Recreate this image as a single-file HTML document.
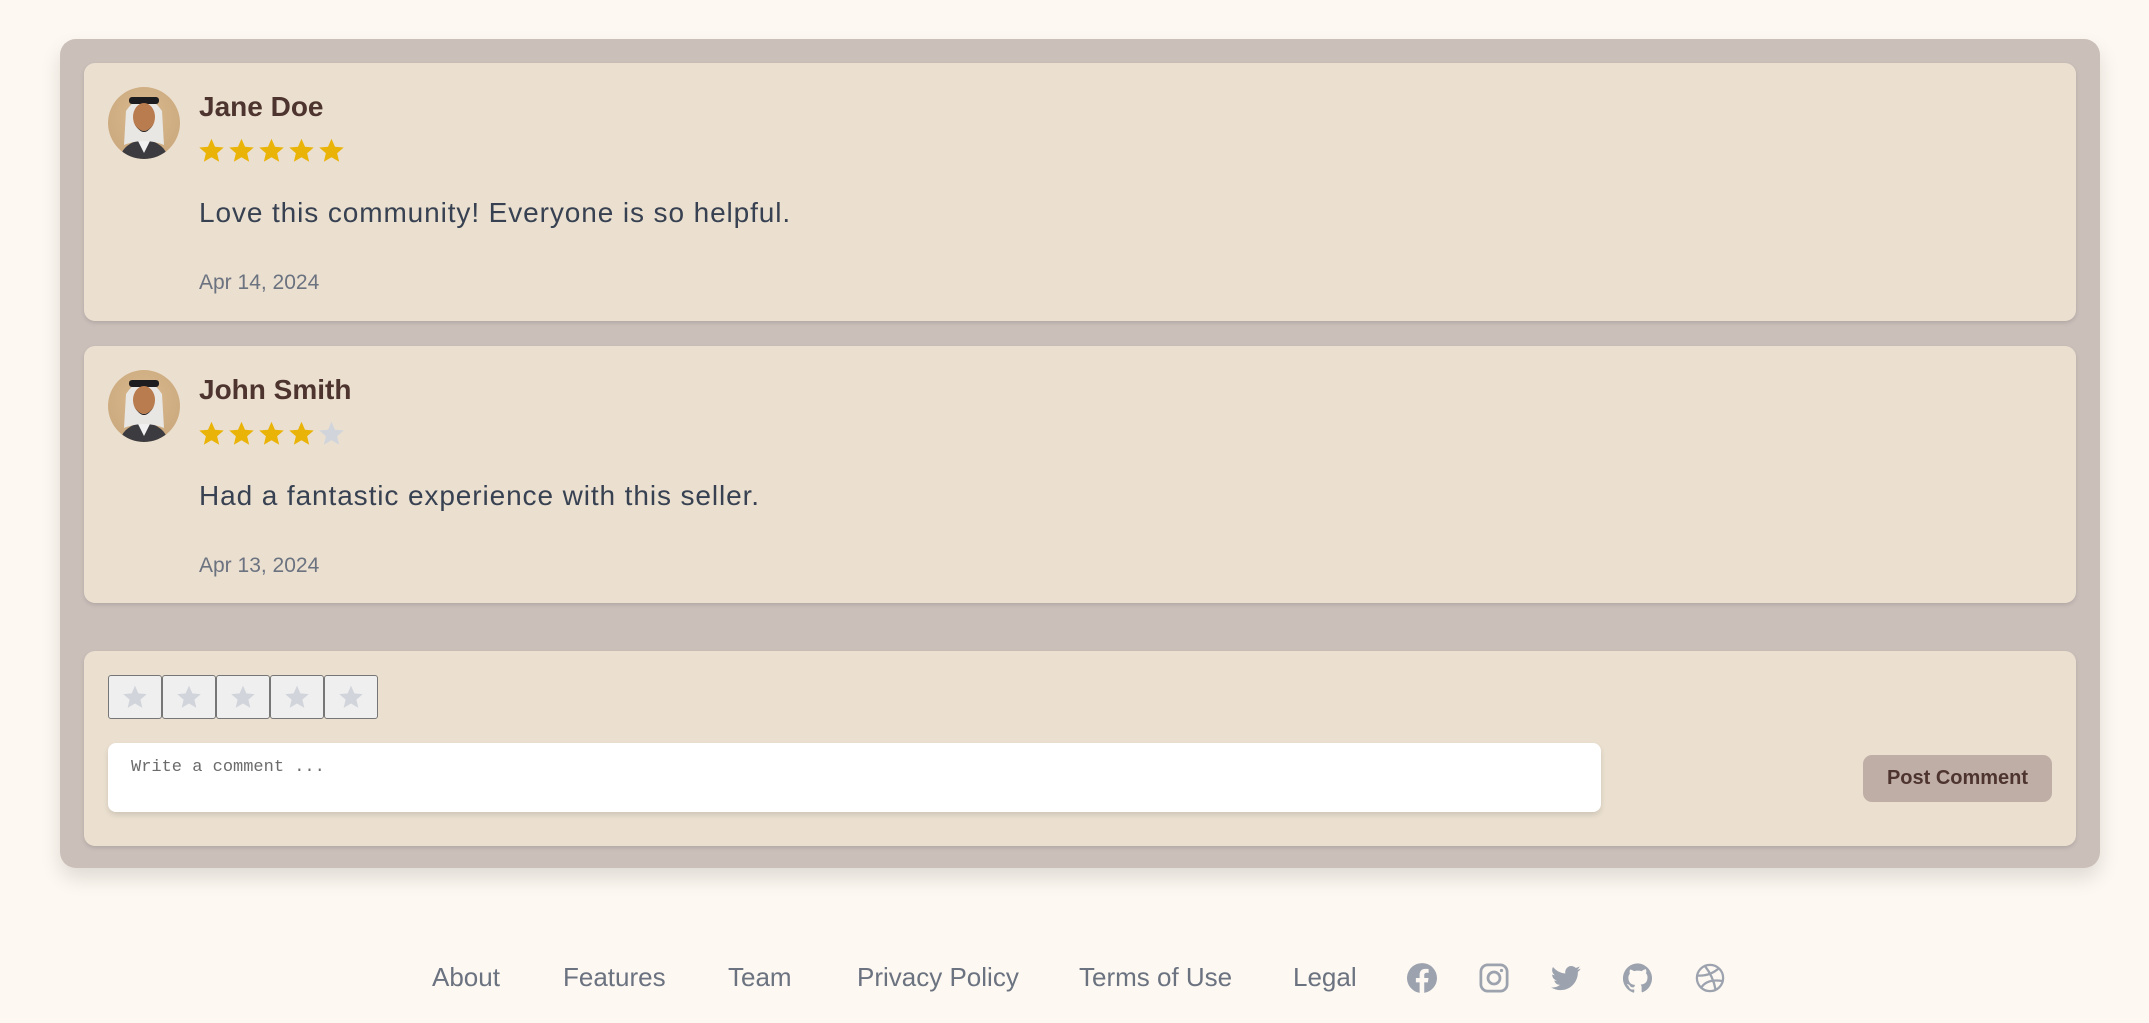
<!DOCTYPE html>
<html><head><meta charset="utf-8"><style>
*{box-sizing:border-box;margin:0;padding:0}
body{width:2149px;height:1023px;background:#fdf8f1;font-family:"Liberation Sans",sans-serif;position:relative;overflow:hidden}
.outer{position:absolute;left:60px;top:39px;width:2040px;height:829px;background:#cbbfba;border-radius:16px;box-shadow:0 10px 20px rgba(0,0,0,.12)}
.card{position:absolute;left:84px;width:1992px;background:#ebe0d0;border-radius:11px;box-shadow:0 2px 4px rgba(0,0,0,.12)}
.av{position:absolute;left:24px;top:24px;width:72px;height:72px;border-radius:50%;background:radial-gradient(circle at 50% 40%,#d9b98e,#c8a57a);overflow:hidden}
.name{position:absolute;left:115px;top:28px;font-size:28px;font-weight:bold;color:#4e342e}
.stars{position:absolute;left:114px;top:74px;display:flex;gap:3px}
.txt{position:absolute;left:115px;top:134px;font-size:28px;letter-spacing:0.9px;color:#374151}
.date{position:absolute;left:115px;top:208px;font-size:21px;color:#6b7280}
.sb{width:54px;height:44px;background:#efefef;border:1.5px solid #767676;border-radius:3px;display:flex;align-items:center;justify-content:center}
.foot{position:absolute;top:962px;font-size:26px;color:#6b7280}
.ic{position:absolute;top:963px;width:30px;height:30px}
</style></head><body>
<div class="outer"></div>

<div class="card" style="top:63px;height:258px">
  <div class="av"><svg width="72" height="72" viewBox="0 0 72 72"><path d="M12 72 Q14 56 36 52 Q58 56 60 72Z" fill="#3b3b40"/><path d="M29 52 L36 66 L43 52Z" fill="#f1f1f1"/><path d="M18 24 Q36 -2 54 24 L56 58 Q36 50 16 58Z" fill="#e9e7e4"/><rect x="21" y="10" width="30" height="7" rx="3" fill="#1d1d1f"/><ellipse cx="36" cy="30" rx="11" ry="14" fill="#b97c4f"/><path d="M25 34 Q36 56 47 34 Q42 44 36 44 Q30 44 25 34Z" fill="#1f1a18"/></svg></div>
  <div class="name">Jane Doe</div>
  <div class="stars">
    <svg width="27" height="27" viewBox="0 0 24 24"><path d="M12 1.5l3.1 7.2 7.8.6-5.9 5.1 1.8 7.6L12 18l-6.8 4 1.8-7.6L1.1 9.3l7.8-.6z" fill="#eab308"/></svg>
    <svg width="27" height="27" viewBox="0 0 24 24"><path d="M12 1.5l3.1 7.2 7.8.6-5.9 5.1 1.8 7.6L12 18l-6.8 4 1.8-7.6L1.1 9.3l7.8-.6z" fill="#eab308"/></svg>
    <svg width="27" height="27" viewBox="0 0 24 24"><path d="M12 1.5l3.1 7.2 7.8.6-5.9 5.1 1.8 7.6L12 18l-6.8 4 1.8-7.6L1.1 9.3l7.8-.6z" fill="#eab308"/></svg>
    <svg width="27" height="27" viewBox="0 0 24 24"><path d="M12 1.5l3.1 7.2 7.8.6-5.9 5.1 1.8 7.6L12 18l-6.8 4 1.8-7.6L1.1 9.3l7.8-.6z" fill="#eab308"/></svg>
    <svg width="27" height="27" viewBox="0 0 24 24"><path d="M12 1.5l3.1 7.2 7.8.6-5.9 5.1 1.8 7.6L12 18l-6.8 4 1.8-7.6L1.1 9.3l7.8-.6z" fill="#eab308"/></svg>
  </div>
  <div class="txt">Love this community! Everyone is so helpful.</div>
  <div class="date">Apr 14, 2024</div>
</div>

<div class="card" style="top:346px;height:257px">
  <div class="av"><svg width="72" height="72" viewBox="0 0 72 72"><path d="M12 72 Q14 56 36 52 Q58 56 60 72Z" fill="#3b3b40"/><path d="M29 52 L36 66 L43 52Z" fill="#f1f1f1"/><path d="M18 24 Q36 -2 54 24 L56 58 Q36 50 16 58Z" fill="#e9e7e4"/><rect x="21" y="10" width="30" height="7" rx="3" fill="#1d1d1f"/><ellipse cx="36" cy="30" rx="11" ry="14" fill="#b97c4f"/><path d="M25 34 Q36 56 47 34 Q42 44 36 44 Q30 44 25 34Z" fill="#1f1a18"/></svg></div>
  <div class="name">John Smith</div>
  <div class="stars">
    <svg width="27" height="27" viewBox="0 0 24 24"><path d="M12 1.5l3.1 7.2 7.8.6-5.9 5.1 1.8 7.6L12 18l-6.8 4 1.8-7.6L1.1 9.3l7.8-.6z" fill="#eab308"/></svg>
    <svg width="27" height="27" viewBox="0 0 24 24"><path d="M12 1.5l3.1 7.2 7.8.6-5.9 5.1 1.8 7.6L12 18l-6.8 4 1.8-7.6L1.1 9.3l7.8-.6z" fill="#eab308"/></svg>
    <svg width="27" height="27" viewBox="0 0 24 24"><path d="M12 1.5l3.1 7.2 7.8.6-5.9 5.1 1.8 7.6L12 18l-6.8 4 1.8-7.6L1.1 9.3l7.8-.6z" fill="#eab308"/></svg>
    <svg width="27" height="27" viewBox="0 0 24 24"><path d="M12 1.5l3.1 7.2 7.8.6-5.9 5.1 1.8 7.6L12 18l-6.8 4 1.8-7.6L1.1 9.3l7.8-.6z" fill="#eab308"/></svg>
    <svg width="27" height="27" viewBox="0 0 24 24"><path d="M12 1.5l3.1 7.2 7.8.6-5.9 5.1 1.8 7.6L12 18l-6.8 4 1.8-7.6L1.1 9.3l7.8-.6z" fill="#d1d5db"/></svg>
  </div>
  <div class="txt">Had a fantastic experience with this seller.</div>
  <div class="date">Apr 13, 2024</div>
</div>

<div class="card" style="top:651px;height:195px">
  <div style="position:absolute;left:24px;top:24px;display:flex">
    <div class="sb"><svg width="26" height="26" viewBox="0 0 24 24"><path d="M12 1.5l3.1 7.2 7.8.6-5.9 5.1 1.8 7.6L12 18l-6.8 4 1.8-7.6L1.1 9.3l7.8-.6z" fill="#d1d5db"/></svg></div>
    <div class="sb"><svg width="26" height="26" viewBox="0 0 24 24"><path d="M12 1.5l3.1 7.2 7.8.6-5.9 5.1 1.8 7.6L12 18l-6.8 4 1.8-7.6L1.1 9.3l7.8-.6z" fill="#d1d5db"/></svg></div>
    <div class="sb"><svg width="26" height="26" viewBox="0 0 24 24"><path d="M12 1.5l3.1 7.2 7.8.6-5.9 5.1 1.8 7.6L12 18l-6.8 4 1.8-7.6L1.1 9.3l7.8-.6z" fill="#d1d5db"/></svg></div>
    <div class="sb"><svg width="26" height="26" viewBox="0 0 24 24"><path d="M12 1.5l3.1 7.2 7.8.6-5.9 5.1 1.8 7.6L12 18l-6.8 4 1.8-7.6L1.1 9.3l7.8-.6z" fill="#d1d5db"/></svg></div>
    <div class="sb"><svg width="26" height="26" viewBox="0 0 24 24"><path d="M12 1.5l3.1 7.2 7.8.6-5.9 5.1 1.8 7.6L12 18l-6.8 4 1.8-7.6L1.1 9.3l7.8-.6z" fill="#d1d5db"/></svg></div>
  </div>
  <div style="position:absolute;left:24px;top:92px;width:1493px;height:69px;background:#fff;border-radius:8px;box-shadow:0 3px 6px rgba(0,0,0,.12);padding:15px 23px;font-family:'Liberation Mono',monospace;font-size:17px;color:#6b6b6b">Write a comment ...</div>
  <div style="position:absolute;left:1779px;top:104px;width:189px;height:47px;background:#bfaea6;border-radius:9px;color:#4e342e;font-weight:bold;font-size:20px;display:flex;align-items:center;justify-content:center">Post Comment</div>
</div>

<div class="foot" style="left:432px">About</div>
<div class="foot" style="left:563px">Features</div>
<div class="foot" style="left:728px">Team</div>
<div class="foot" style="left:857px">Privacy Policy</div>
<div class="foot" style="left:1079px">Terms of Use</div>
<div class="foot" style="left:1293px">Legal</div>

<svg class="ic" style="left:1407px" viewBox="0 0 24 24"><path fill="#9ca3af" d="M24 12a12 12 0 1 0-13.9 11.9v-8.4H7.1V12h3V9.4c0-3 1.8-4.7 4.5-4.7 1.3 0 2.7.2 2.7.2v2.9h-1.5c-1.5 0-2 .9-2 1.9V12h3.4l-.5 3.5h-2.9v8.4A12 12 0 0 0 24 12z"/></svg>
<svg class="ic" style="left:1479px" viewBox="0 0 24 24"><rect x="1.5" y="1.5" width="21" height="21" rx="5.5" fill="none" stroke="#9ca3af" stroke-width="2.2"/><circle cx="12" cy="12" r="4.8" fill="none" stroke="#9ca3af" stroke-width="2.2"/><circle cx="18" cy="6" r="1.3" fill="#9ca3af"/></svg>
<svg class="ic" style="left:1551px" viewBox="0 0 24 24"><path fill="#9ca3af" d="M23.6 4.6c-.9.4-1.8.6-2.8.8 1-.6 1.800-1.6 2.1-2.7-1 .6-2 1-3.1 1.2A4.9 4.9 0 0 0 11.5 8.4 14 14 0 0 1 1.6 3.2a4.9 4.9 0 0 0 1.5 6.6c-.8 0-1.6-.3-2.2-.6 0 2.4 1.7 4.4 3.9 4.8-.7.2-1.5.2-2.2.1.6 2 2.4 3.4 4.6 3.4A9.9 9.9 0 0 1 0 19.5 14 14 0 0 0 7.5 21.7c9.1 0 14-7.5 14-14v-.6c1-.7 1.8-1.6 2.1-2.5z"/></svg>
<svg class="ic" style="left:1623px" viewBox="0 0 24 24"><path fill="#9ca3af" d="M12 .3a12 12 0 0 0-3.8 23.4c.6.1.8-.3.8-.6v-2c-3.3.7-4-1.6-4-1.6-.6-1.4-1.4-1.8-1.4-1.8-1-.7.1-.7.1-.7 1.2.1 1.8 1.2 1.8 1.2 1 1.8 2.8 1.3 3.5 1 .1-.8.4-1.3.8-1.6-2.7-.3-5.5-1.3-5.5-5.900 0-1.3.5-2.4 1.2-3.2-.1-.3-.5-1.5.1-3.2 0 0 1-.3 3.3 1.2a11.5 11.5 0 0 1 6 0C17.3 4.7 18.3 5 18.3 5c.7 1.7.2 2.9.1 3.2.8.8 1.2 1.9 1.2 3.2 0 4.6-2.8 5.6-5.5 5.9.4.4.8 1.1.8 2.2v3.3c0 .3.2.7.8.6A12 12 0 0 0 12 .3z"/></svg>
<svg class="ic" style="left:1695px" viewBox="0 0 24 24" fill="none" stroke="#9ca3af" stroke-width="1.8"><circle cx="12" cy="12" r="10.5"/><path d="M8 2.5c4 5 7 11 8.5 19"/><path d="M1.8 10c6 .5 12-1 17.5-6"/><path d="M4.8 20c3-5 9-7 17.5-5.5"/></svg>
</body></html>
